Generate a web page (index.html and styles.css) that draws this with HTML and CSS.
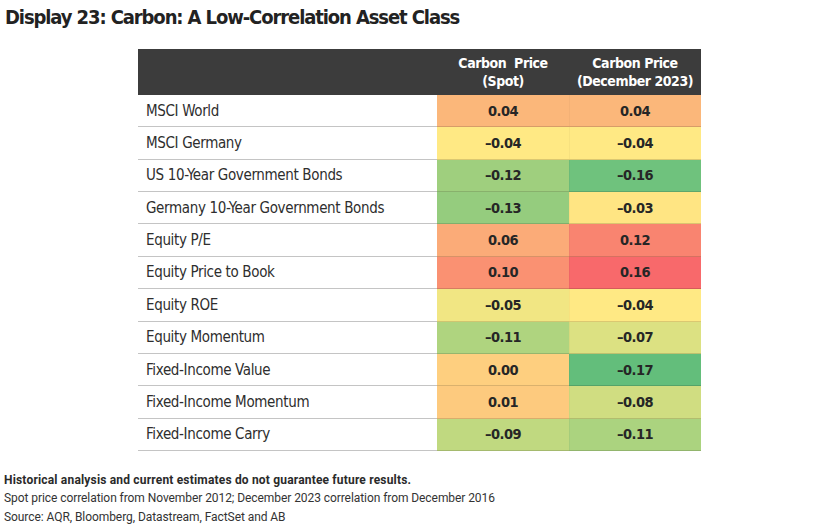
FILE: index.html
```html
<!DOCTYPE html>
<html>
<head>
<meta charset="utf-8">
<link rel="stylesheet" href="styles.css">
</head>
<body>
<div class="page">
  <h1 class="title">Display 23: Carbon: A Low-Correlation Asset Class</h1>
  <div class="table-wrap">
    <div class="grid">
      <div class="hcell"></div>
      <div class="hcell num">Carbon&nbsp; Price<br>(Spot)</div>
      <div class="hcell num">Carbon Price<br>(December 2023)</div>

      <div class="label">MSCI World</div>
      <div class="val" style="background:#fbb77a">0.04</div>
      <div class="val c3" style="background:#fbb77a">0.04</div>

      <div class="label">MSCI Germany</div>
      <div class="val" style="background:#ffe984">–0.04</div>
      <div class="val c3" style="background:#ffe984">–0.04</div>

      <div class="label">US 10-Year Government Bonds</div>
      <div class="val" style="background:#9fcf7e">–0.12</div>
      <div class="val c3" style="background:#6fc27d">–0.16</div>

      <div class="label">Germany 10-Year Government Bonds</div>
      <div class="val" style="background:#95cc7e">–0.13</div>
      <div class="val c3" style="background:#ffe583">–0.03</div>

      <div class="label">Equity P/E</div>
      <div class="val" style="background:#fbab78">0.06</div>
      <div class="val c3" style="background:#f98470">0.12</div>

      <div class="label">Equity Price to Book</div>
      <div class="val" style="background:#fa9172">0.10</div>
      <div class="val c3" style="background:#f8696b">0.16</div>

      <div class="label">Equity ROE</div>
      <div class="val" style="background:#f1e683">–0.05</div>
      <div class="val c3" style="background:#ffe984">–0.04</div>

      <div class="label">Equity Momentum</div>
      <div class="val" style="background:#afd47f">–0.11</div>
      <div class="val c3" style="background:#dce182">–0.07</div>

      <div class="label">Fixed-Income Value</div>
      <div class="val" style="background:#fecf7f">0.00</div>
      <div class="val c3" style="background:#63be7b">–0.17</div>

      <div class="label">Fixed-Income Momentum</div>
      <div class="val" style="background:#fdca7e">0.01</div>
      <div class="val c3" style="background:#d0dd81">–0.08</div>

      <div class="label">Fixed-Income Carry</div>
      <div class="val" style="background:#c0d980">–0.09</div>
      <div class="val c3" style="background:#abd37f">–0.11</div>
    </div>
  </div>
  <div class="notes">
    <p class="strong">Historical analysis and current estimates do not guarantee future results.</p>
    <p class="reg">Spot price correlation from November 2012; December 2023 correlation from December 2016</p>
    <p class="reg">Source: AQR, Bloomberg, Datastream, FactSet and AB</p>
  </div>
</div>
</body>
</html>
```
FILE: styles.css
```css
html, body {
  margin: 0;
  padding: 0;
  background: #ffffff;
}

.page {
  width: 840px;
  height: 526px;
  overflow: hidden;
}

.title {
  margin: 0;
  padding: 5px 0 0 5px;
  font-family: "DejaVu Sans Condensed", "Liberation Sans", sans-serif;
  font-weight: 700;
  font-size: 20px;
  letter-spacing: -1.1px;
  line-height: 24px;
  color: #222222;
}

.table-wrap {
  margin-top: 20px;
  padding-left: 138px;
}

.grid {
  display: grid;
  width: 563px;
  grid-template-columns: 299px 132px 132px;
  grid-template-rows: 46px;
  grid-auto-rows: 32.36px;
  font-family: "DejaVu Sans Condensed", "Liberation Sans", sans-serif;
}

.hcell {
  background: #3c3c3c;
  color: #ffffff;
  font-weight: 700;
  font-size: 14px;
  letter-spacing: -0.45px;
  line-height: 18px;
  padding-top: 5px;
  text-align: center;
}

.label {
  box-sizing: border-box;
  display: flex;
  align-items: center;
  padding-left: 8px;
  font-size: 15px;
  letter-spacing: -0.35px;
  color: #2e2e2e;
  border-bottom: 1px solid #c4c4c4;
}

.val {
  box-sizing: border-box;
  display: flex;
  align-items: center;
  justify-content: center;
  font-size: 14.5px;
  letter-spacing: -0.5px;
  font-weight: 700;
  color: #262626;
  border-bottom: 1px solid rgba(0, 0, 0, 0.14);
}

.c3 {
  box-shadow: inset 1px 0 0 rgba(0, 0, 0, 0.03);
}

.notes {
  margin-top: 20px;
  padding-left: 4px;
  font-family: Roboto, "Liberation Sans", sans-serif;
  font-size: 12px;
  line-height: 18.5px;
  color: #333333;
}

.notes p {
  margin: 0;
}

.notes .strong {
  font-weight: 700;
  letter-spacing: 0.18px;
  color: #2a2a2a;
}

.notes .reg {
  letter-spacing: -0.07px;
}
```
